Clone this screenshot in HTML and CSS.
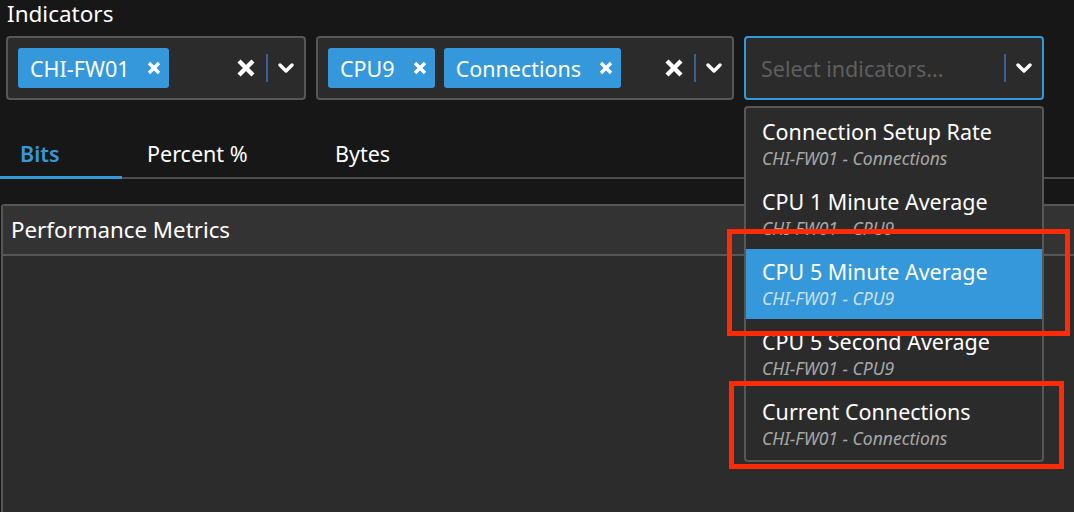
FILE: index.html
```html
<!DOCTYPE html>
<html>
<head>
<meta charset="utf-8">
<link rel="stylesheet" href="styles.css">
</head>
<body>
<div class="page">
  <h1 class="heading">Indicators</h1>
  <div class="selects">
    <div class="select select-a">
      <div class="tags">
        <span class="tag">CHI-FW01<svg class="tag-x" viewBox="0 0 14 14"><path d="M2 2L12 12M12 2L2 12"/></svg></span>
      </div>
      <div class="controls">
        <span class="clear"><svg viewBox="0 0 20 20"><path d="M3 3L17 17M17 3L3 17"/></svg></span>
        <span class="sep"></span>
        <span class="chev"><svg viewBox="0 0 16 10"><path d="M2 2L8 8L14 2"/></svg></span>
      </div>
    </div>
    <div class="select select-b">
      <div class="tags">
        <span class="tag">CPU9<svg class="tag-x" viewBox="0 0 14 14"><path d="M2 2L12 12M12 2L2 12"/></svg></span>
        <span class="tag">Connections<svg class="tag-x" viewBox="0 0 14 14"><path d="M2 2L12 12M12 2L2 12"/></svg></span>
      </div>
      <div class="controls">
        <span class="clear"><svg viewBox="0 0 20 20"><path d="M3 3L17 17M17 3L3 17"/></svg></span>
        <span class="sep"></span>
        <span class="chev"><svg viewBox="0 0 16 10"><path d="M2 2L8 8L14 2"/></svg></span>
      </div>
    </div>
    <div class="select-wrap">
      <div class="select select-c focused">
        <span class="placeholder">Select indicators...</span>
        <div class="controls">
          <span class="sep"></span>
          <span class="chev"><svg viewBox="0 0 16 10"><path d="M2 2L8 8L14 2"/></svg></span>
        </div>
      </div>
      <div class="menu">
        <div class="option">
          <div class="opt-title">Connection Setup Rate</div>
          <div class="opt-sub">CHI-FW01 - Connections</div>
        </div>
        <div class="option">
          <div class="opt-title">CPU 1 Minute Average</div>
          <div class="opt-sub">CHI-FW01 - CPU9</div>
        </div>
        <div class="option active">
          <div class="opt-title">CPU 5 Minute Average</div>
          <div class="opt-sub">CHI-FW01 - CPU9</div>
        </div>
        <div class="option">
          <div class="opt-title">CPU 5 Second Average</div>
          <div class="opt-sub">CHI-FW01 - CPU9</div>
        </div>
        <div class="option">
          <div class="opt-title">Current Connections</div>
          <div class="opt-sub">CHI-FW01 - Connections</div>
        </div>
      </div>
    </div>
  </div>

  <div class="tabs">
    <div class="tab tab-bits active">Bits</div>
    <div class="tab tab-percent">Percent %</div>
    <div class="tab tab-bytes">Bytes</div>
  </div>

  <div class="panel">
    <div class="panel-head">Performance Metrics</div>
    <div class="panel-body"></div>
  </div>
</div>
<div class="mark mark-1"></div>
<div class="mark mark-2"></div>
</body>
</html>
```

FILE: styles.css
```css
* { box-sizing: border-box; }
html, body {
  margin: 0;
  padding: 0;
  height: 100%;
}
body {
  background: #171717;
  color: #ffffff;
  font-family: "Noto Sans", "Open Sans", sans-serif;
  overflow: hidden;
  position: relative;
}
.page {
  display: flex;
  flex-direction: column;
  height: 100%;
}
.heading {
  margin: 0;
  padding-left: 7px;
  font-size: 22.5px;
  font-weight: 400;
  line-height: 28px;
  height: 28px;
}
.selects {
  display: flex;
  gap: 10px;
  margin-top: 8px;
  padding-left: 6px;
}
.select {
  height: 64px;
  background: #2b2b2b;
  border: 2px solid #575757;
  border-radius: 4px;
  display: flex;
  align-items: center;
}
.select-a { width: 300px; padding-left: 10px; }
.select-b { width: 418px; padding-left: 10px; }
.select-wrap { position: relative; width: 300px; }
.select-c { width: 300px; padding-left: 15px; }
.select.focused { border-color: #3498db; }
.tags {
  display: flex;
  gap: 9px;
}
.tag {
  height: 40px;
  background: #3498db;
  border-radius: 3px;
  display: flex;
  align-items: center;
  padding: 0 8px 0 12px;
  font-size: 21.5px;
  color: #fff;
}
.tag-x {
  width: 14px;
  height: 14px;
  margin-left: 18px;
  fill: none;
  stroke: #fff;
  stroke-width: 3.4;
}
.controls {
  margin-left: auto;
  display: flex;
  align-items: center;
  height: 100%;
}
.clear {
  width: 41px;
  display: flex;
  justify-content: center;
}
.clear svg {
  width: 20px;
  height: 20px;
  fill: none;
  stroke: #fff;
  stroke-width: 4.4;
}
.sep {
  width: 2px;
  height: 28px;
  background: #3b5e9b;
}
.chev {
  width: 36px;
  display: flex;
  justify-content: center;
}
.chev svg {
  width: 16px;
  height: 10px;
  fill: none;
  stroke: #fff;
  stroke-width: 3.4;
  stroke-linecap: round;
  stroke-linejoin: round;
}
.placeholder {
  font-size: 21.5px;
  color: #5f5f5f;
}
.menu {
  position: absolute;
  left: 0;
  top: 70px;
  width: 300px;
  background: #2b2b2b;
  border: 2px solid #575757;
  border-radius: 4px;
  padding: 1px 0;
  z-index: 2;
}
.option {
  height: 70px;
  padding: 9px 0 0 16px;
}
.option.active { background: #3498db; }
.opt-title {
  font-size: 21.5px;
  line-height: 27px;
  color: #fff;
}
.opt-sub {
  font-size: 17.5px;
  line-height: 26px;
  font-style: italic;
  color: #a8a8a8;
}
.option.active .opt-sub { color: #cde0f2; }

.tabs {
  display: flex;
  margin-top: 30px;
  height: 49px;
  border-bottom: 2px solid #4d4d4d;
}
.tab {
  font-size: 21.5px;
  line-height: 47px;
  height: 49px;
  color: #fff;
}
.tab-bits { width: 122px; padding-left: 20px; }
.tab-percent { width: 188px; padding-left: 25px; }
.tab-bytes { padding-left: 25px; }
.tab.active {
  color: #3498db;
  font-weight: 600;
  border-bottom: 3px solid #3498db;
}

.panel {
  margin-top: 25px;
  margin-left: 1px;
  margin-right: -20px;
  flex: 1;
  border: 2px solid #575757;
  border-bottom: none;
  border-radius: 3px 3px 0 0;
  display: flex;
  flex-direction: column;
}
.panel-head {
  height: 50px;
  background: #333333;
  border-bottom: 2px solid #575757;
  padding-left: 8px;
  font-size: 22.3px;
  line-height: 47px;
}
.panel-body {
  flex: 1;
  background: #2c2c2c;
}

.mark {
  position: absolute;
  border: 5px solid #ff2b06;
  z-index: 5;
}
.mark-1 { left: 727px; top: 229px; width: 343px; height: 107px; }
.mark-2 { left: 729px; top: 381px; width: 335px; height: 88px; }
```
